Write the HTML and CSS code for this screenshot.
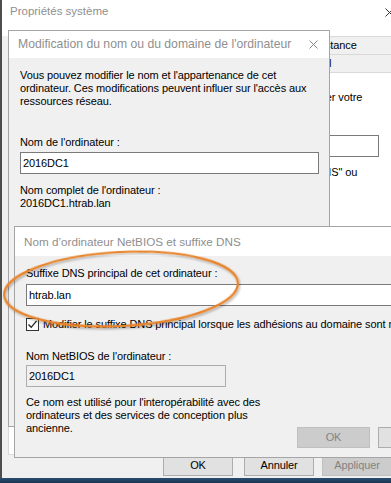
FILE: index.html
```html
<!DOCTYPE html>
<html lang="fr">
<head>
<meta charset="utf-8">
<title>Propriétés système</title>
<link rel="stylesheet" href="styles.css">
</head>
<body>
<div class="desk">
  <div class="win back">
    <div class="titlebar">
      <span class="ttl">Propriétés système</span>
      <span class="close"><svg width="9" height="9" viewBox="0 0 9 9"><path d="M0.5 0.5L8.5 8.5M8.5 0.5L0.5 8.5" stroke="#333" stroke-width="1" fill="none"/></svg></span>
    </div>
    <div class="tabs">
      <div class="tabrow r1"><span class="tab ta">Paramètres système avancés</span><span class="tab tb">Protection du système</span><span class="tab tf">Utilisation à distance</span></div>
      <div class="tabrow r2"><span class="tab tc">Nom de l'ordinateur</span><span class="tab td">Matériel</span></div>
    </div>
    <div class="panel">
      <p class="intro">Windows utilise les informations suivantes pour identifier votre<br>ordinateur sur le réseau.</p>
      <div class="descrow"><span class="desclbl">Description de l'ordinateur :</span><span class="field descfield"></span></div>
      <p class="example">Par exemple : "Ordinateur IIS" ou<br>"Ordinateur de Marie".</p>
    </div>
    <div class="btnrow">
      <span class="btn b-ok">OK</span>
      <span class="btn b-ann">Annuler</span>
      <span class="btn off b-app">Appliquer</span>
    </div>
  </div>

  <div class="win dlg1">
    <div class="titlebar">
      <span class="ttl">Modification du nom ou du domaine de l'ordinateur</span>
      <span class="close small"><svg width="9" height="9" viewBox="0 0 9 9"><path d="M0.5 0.5L8.5 8.5M8.5 0.5L0.5 8.5" stroke="#8a8a8a" stroke-width="1" fill="none"/></svg></span>
    </div>
    <div class="body1">
      <p class="txt">Vous pouvez modifier le nom et l'appartenance de cet<br>ordinateur. Ces modifications peuvent influer sur l'accès aux<br>ressources réseau.</p>
      <p class="lbl l-name">Nom de l'ordinateur :</p>
      <div class="field f-name">2016DC1</div>
      <p class="lbl l-full">Nom complet de l'ordinateur :</p>
      <p class="lbl">2016DC1.htrab.lan</p>
    </div>
  </div>

  <div class="win dlg3">
    <div class="titlebar">
      <span class="ttl">Nom d’ordinateur NetBIOS et suffixe DNS</span>
    </div>
    <div class="body3">
      <p class="lbl">Suffixe DNS principal de cet ordinateur :</p>
      <div class="field f-dns">htrab.lan</div>
      <div class="chkrow">
        <span class="chk"><svg width="11" height="11" viewBox="0 0 11 11"><path d="M1.5 5.5L4.2 8.3L9.6 1.8" stroke="#222" stroke-width="1.3" fill="none"/></svg></span>
        <span class="chklbl">Modifier le suffixe DNS principal lorsque les adhésions au domaine sont modifiées</span>
      </div>
      <p class="lbl l-nb">Nom NetBIOS de l'ordinateur :</p>
      <div class="field f-nb">2016DC1</div>
      <div class="foot">
        <p class="txt note">Ce nom est utilisé pour l'interopérabilité avec des ordinateurs et des services de conception plus ancienne.</p>
        <div class="btns3">
          <span class="btn off w73">OK</span>
          <span class="btn w73">Annuler</span>
        </div>
      </div>
    </div>
  </div>

  <svg class="ring" width="260" height="110" viewBox="0 0 260 110">
    <defs>
      <filter id="sh" x="-10%" y="-20%" width="120%" height="140%">
        <feDropShadow dx="1" dy="1.5" stdDeviation="1.2" flood-color="#000" flood-opacity="0.35"/>
      </filter>
    </defs>
    <ellipse cx="121" cy="54" rx="117" ry="37" transform="rotate(-3 121 54)" fill="none" stroke="#e8842c" stroke-width="2.2" filter="url(#sh)"/>
  </svg>

  <div class="taskbar"></div>
</div>
</body>
</html>
```

FILE: styles.css
```css
* { box-sizing: border-box; margin: 0; padding: 0; }
html, body { width: 391px; height: 483px; overflow: hidden; }
body {
  font-family: "Liberation Sans", Arial, sans-serif;
  font-size: 11px;
  line-height: 13px;
  letter-spacing: -0.1px;
  color: #000;
  background: #20405e;
}
.desk { position: relative; width: 391px; height: 483px; overflow: hidden; }

.win { position: absolute; background: #f0f0f0; display: flex; flex-direction: column; }
.titlebar { flex: none; display: flex; align-items: center; justify-content: space-between; background: #fff; }
.ttl { font-size: 12.2px; letter-spacing: 0; color: #8f8f8f; white-space: nowrap; }
.close { display: flex; align-items: center; }

/* back window */
.back { left: 0; top: 0; width: 412px; height: 500px; border-left: 2px solid #4e4e4e; }
.back .titlebar { height: 36px; padding: 5px 0 0 8px; align-items: flex-start; }
.back .ttl { font-size: 11.5px; }
.back .close { width: 46px; justify-content: center; padding-top: 3px; }
.tabs { margin-left: 6px; display: flex; flex-direction: column; }
.tabrow { display: flex; height: 18px; }
.tab { flex: none; height: 18px; border: 1px solid #d9d9d9; border-bottom: none; background: #f0f0f0; padding: 2px 0 0 5px; white-space: nowrap; overflow: hidden; }
.r1 .ta { width: 130px; }
.r1 .tb { width: 115px; }
.r1 .tf { width: 170px; padding-left: 4px; }
.r2 .tc { width: 274px; }
.r2 .td { width: 200px; padding-left: 10px; }
.panel { margin-left: 6px; height: 383px; background: #fff; border: 1px solid #d9d9d9; padding: 18px 0 0 57px; }
.intro { white-space: nowrap; }
.descrow { display: flex; align-items: center; margin-top: 18px; }
.desclbl { width: 132px; white-space: nowrap; }
.descfield { width: 181px; height: 20px; }
.example { margin: 9px 0 0 132px; white-space: nowrap; }
.btnrow { display: flex; padding: 0 0 0 161px; }
.b-ok { width: 71px; }
.b-ann { width: 66px; margin-left: 11px; }
.b-app { width: 70px; margin-left: 8px; }

/* common controls */
.field { background: #fff; border: 1px solid #7a7a7a; padding: 0 0 0 2px; height: 22px; display: flex; align-items: center; white-space: nowrap; }
.btn { flex: none; display: flex; align-items: center; justify-content: center; height: 21px; width: 70px; background: #e1e1e1; border: 1px solid #adadad; color: #000; }
.btn.off { background: #cccccc; border-color: #bfbfbf; color: #838383; }
.w73 { width: 73px; }
.lbl { white-space: nowrap; }

/* dialog 1 */
.dlg1 { left: 8px; top: 30px; width: 322px; height: 397px; border: 1px solid #a5a5a5; }
.dlg1 .titlebar { height: 27px; padding-left: 9px; }
.dlg1 .close { margin-right: 11px; }
.body1 { padding: 11px 0 0 11px; }
.l-name { margin-top: 28px; }
.f-name { margin-top: 3px; width: 299px; }
.l-full { margin-top: 10px; }

/* dialog 3 */
.dlg3 { left: 14px; top: 226px; width: 400px; height: 232px; border: 1px solid #a5a5a5; }
.dlg3 .titlebar { height: 29px; padding-left: 9px; }
.dlg3 .ttl { font-size: 11.7px; }
.body3 { padding: 11px 0 0 11px; }
.f-dns { margin-top: 4px; width: 390px; }
.chkrow { display: flex; align-items: center; gap: 4px; margin-top: 12px; }
.chk { flex: none; width: 13px; height: 13px; border: 1px solid #333; background: #fff; display: flex; align-items: center; justify-content: center; }
.chklbl { white-space: nowrap; }
.l-nb { margin-top: 19px; }
.f-nb { margin-top: 2px; width: 200px; background: #f0f0f0; border-color: #adadad; }
.foot { display: flex; align-items: flex-start; margin-top: 9px; }
.note { flex: none; width: 260px; margin-right: 11px; }
.btns3 { display: flex; gap: 8px; margin-top: 31px; }

/* annotation + taskbar */
.ring { position: absolute; left: 0; top: 235px; overflow: visible; }
.taskbar { position: absolute; left: 0; right: 0; bottom: 0; height: 5px; background: linear-gradient(#2a4d70, #1b3652); }
```
